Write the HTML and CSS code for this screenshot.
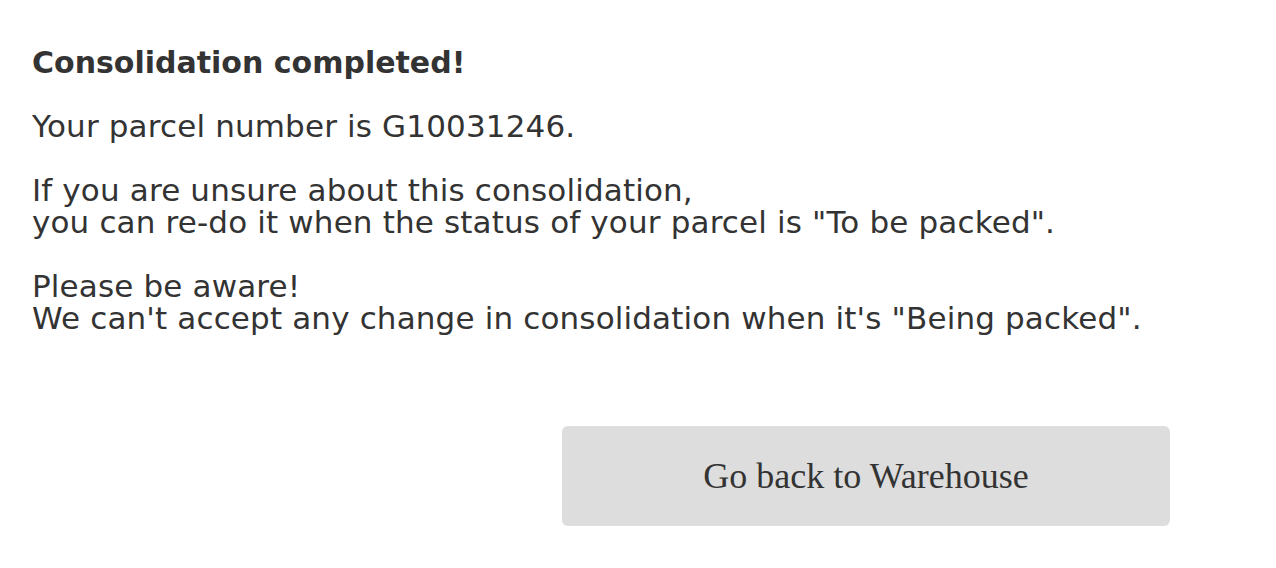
FILE: index.html
```html
<!DOCTYPE html>
<html>
<head>
<meta charset="UTF-8">
<title>Consolidation completed</title>
<link rel="stylesheet" href="styles.css">
</head>
<body>

<div class="done-box">
<h2 class="title">Consolidation completed!</h2>
<p>Your parcel number is G10031246.</p>
<p>If you are unsure about this consolidation,<br>you can re-do it when the status of your parcel is "To be packed".</p>
<p>Please be aware!<br>We can't accept any change in consolidation when it's "Being packed".</p>

<div class="actions">
<button class="btn back">Go back to Warehouse</button>
</div>
</div>

</body>
</html>
```

FILE: styles.css
```css
body { margin:0; font-family:"DejaVu Sans", Arial, sans-serif; color:#333; background:#fff; }
.done-box { padding:45px 32px 0 32px; width:1138px; }
.title { font-size:30px; font-weight:bold; margin:0 0 29px 0; line-height:36px; }
p { font-size:31px; line-height:32px; margin:0 0 32px 0; letter-spacing:0.15px; }
.actions { display:flex; justify-content:flex-end; padding-top:60px; }
.btn { width:608px; height:100px; border:none; border-radius:6px; background:#ddd; color:#333; font-family:"Liberation Serif", "Times New Roman", serif; font-size:36px; }
```
